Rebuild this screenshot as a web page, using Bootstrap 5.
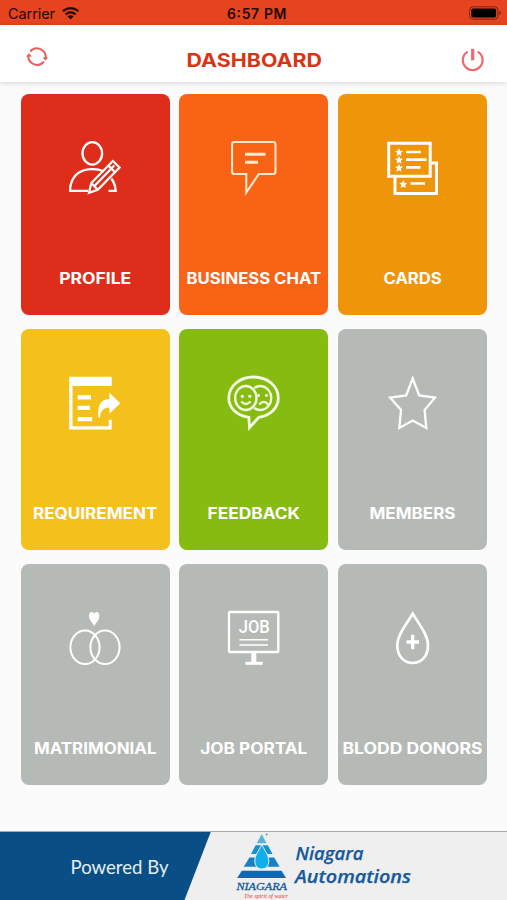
<!DOCTYPE html>
<html lang="en">
<head>
<meta charset="utf-8">
<meta name="viewport" content="width=device-width, initial-scale=1">
<title>Dashboard</title>
<link href="https://cdn.jsdelivr.net/npm/bootstrap@5.3.0/dist/css/bootstrap.min.css" rel="stylesheet">
<style>
body{background:#fbfbfb;font-family:Inter,"Liberation Sans",sans-serif;width:507px;height:900px;overflow:hidden}
svg{display:block;overflow:visible}
.status{height:25px;background:#e6431f;color:#250800}
.topbar{height:57px;background:#fff;box-shadow:0 1px 5px rgba(0,0,0,.16)}
.tiles{display:grid;grid-template-columns:repeat(3,149px);grid-auto-rows:221px;gap:14px 9.7px;margin:12px 0 0 20.5px}
.tile{border-radius:8px;color:#fff;text-decoration:none}
.tile svg{fill:none;stroke:#fff;stroke-width:2.3}
.tile text{fill:#fff;stroke:none;font-weight:700;font-size:15.4px;text-anchor:middle}
.tile .solid{fill:#fff;stroke:none}
.red{background:#de2d1b}.orange{background:#f86316}.amber{background:#ee950a}
.yellow{background:#f3c01c}.green{background:#86bc11}.gray{background:#b5bab6}
.brandbar{height:69px;background:#efefef;border-top:1px solid #aaa}
</style>
<script src="https://cdn.jsdelivr.net/npm/bootstrap@5.3.0/dist/js/bootstrap.bundle.min.js"></script>
</head>
<body class="d-flex flex-column">
<header>
<div class="status">
<svg width="507" height="25" fill="#250800">
<text x="8" y="18.8" font-size="14.5" textLength="47">Carrier</text>
<g fill="none" stroke="#250800" stroke-width="2.3"><path d="M62.8 11.1q7.8-6 15.6 0M65.6 14.3q5-3.9 10 0"/></g>
<path d="M67.5 16.3q3.1-2.1 6.2 0L70.6 19.4z"/>
<text x="227" y="18.8" font-size="14" font-weight="600" textLength="59.5">6:57 PM</text>
<rect x="469.5" y="6.8" width="28.5" height="12.4" rx="3.5" fill="none" stroke="#7c2411"/>
<rect x="471.3" y="8.5" width="24.8" height="9" rx="1.8" fill="#000"/>
<path d="M499.3 11v4q1.5-.5 1.5-2t-1.5-2z" fill="#7c2411"/>
</svg>
</div>
<div class="topbar">
<svg width="507" height="57" viewBox="0 25 507 57">
<g fill="none" stroke="#e5605c" stroke-width="2">
<path d="M30.2 51.5A8.8 8.8 0 0 1 45.7 58.2M43.9 61.7A8.8 8.8 0 0 1 28.4 55"/>
</g>
<path d="M42.8 57.2l5.4.3-3 3.2zM26 56.8l2.8-3.6 3.3 3.4z" fill="#e5605c"/>
<text x="186.5" y="66.6" font-size="18.8" font-weight="700" fill="#d93414" textLength="135.5" lengthAdjust="spacingAndGlyphs">DASHBOARD</text>
<g fill="none" stroke="#ea6a70" stroke-width="2.2"><path d="M467.7 51.6a9.9 9.9 0 1 0 10 0"/><path d="M472.7 48.8v11.5" stroke-width="3.2"/></g>
</svg>
</div>
</header>
<main class="tiles">
<a class="tile red"><svg width="149" height="221">
<g transform="translate(34 36)"><ellipse cx="37.3" cy="23.4" rx="9.8" ry="11.2"/><path d="M49 41.5q-5-2.3-11.5-2.3-19 0-22.3 18v3.6H33M53.5 60.8h7.2q-.3-6.5-4.3-12.3"/><path d="M34 62.8l2.3-9.8L57.8 31l6.8 6.5-21.8 22.2zM36.3 53l6.5 6.7M39.7 55.8l19.6-20.2M53.4 35.6l6.6 6.6" stroke-width="2.2"/></g>
<text x="74.2" y="189.600" textLength="72" lengthAdjust="spacingAndGlyphs">PROFILE</text></svg></a>
<a class="tile orange"><svg width="149" height="221">
<g transform="translate(35.8 36)" stroke="#ffe9cc" stroke-width="2"><path d="M19.5 12h39q2.2 0 2.2 2.2v27.6q0 2.2-2.2 2.2H44L31.5 62.5V44h-12q-2.2 0-2.2-2.2V14.2q0-2.2 2.2-2.2z"/><path d="M30.2 24.3h20.5M30.2 32.3h13" stroke-width="3"/></g>
<text x="74.8" y="189.6" textLength="134.5" lengthAdjust="spacingAndGlyphs">BUSINESS CHAT</text></svg></a>
<a class="tile amber"><svg width="149" height="221">
<g transform="translate(35 36)"><path d="M15.7 13.2h41.5v33H15.7z" stroke-width="3"/><path d="M22 47v16.4h41.5V33H58" stroke-width="3"/><path d="M33 22h15M33 29.6h20.5M33 37.3h14.5M37.5 53.5h14.5" stroke-width="2.7"/>
<g class="solid"><path id="smallStar" d="M26 18l1.2 2.7 2.8.3-2.1 2 .6 3-2.5-1.5-2.5 1.5.6-3-2.1-2 2.8-.3z"/><use href="#smallStar" y="7.8"/><use href="#smallStar" y="15.7"/><use href="#smallStar" x="4.3" y="32.1"/></g></g>
<text x="74.6" y="189.6" textLength="58" lengthAdjust="spacingAndGlyphs">CARDS</text></svg></a>

<a class="tile yellow"><svg width="149" height="221">
<g transform="translate(34 36)"><path class="solid" d="M14.2 11.7h42.5v9.2H17.5v40.3h36.2v-6.4h3V64.5H14.2z"/><path d="M22.7 32.4H36M22.7 42.9H35M22.7 54.2h14.5" stroke-width="4.2"/><path class="solid" d="M43.5 52.8C42 40 46 34.2 54.4 34v-6.2L65.3 38.2 54.4 48.8v-6.4c-6 .1-9.2 3.5-9.4 10.4z"/></g>
<text x="74.2" y="189.6" textLength="124.5" lengthAdjust="spacingAndGlyphs">REQUIREMENT</text></svg></a>
<a class="tile green"><svg width="149" height="221">
<g transform="translate(35.8 36)" stroke="#f4fde2"><path d="M34 52.3C20.5 50 14 42 14 33c0-12 11-21 24.8-21s24.7 9 24.7 21c0 10-8 17.3-19.5 19.3l-9.3 10.4z" stroke-width="2.8"/><ellipse cx="31" cy="33" rx="10.7" ry="12"/><path d="M39.4 23a11 12 0 1 1 0 20"/><path d="M26.5 36.5q4.6 5 9.2 0M44.5 39.5q4.4-5.4 8.8 0"/><g class="solid"><circle cx="27.5" cy="31.3" r="1.6"/><circle cx="35" cy="31.3" r="1.6"/><circle cx="43.8" cy="30.5" r="1.4"/><circle cx="51.6" cy="30.5" r="1.4"/></g></g>
<text x="74.8" y="189.6" textLength="92.5" lengthAdjust="spacingAndGlyphs">FEEDBACK</text></svg></a>
<a class="tile gray"><svg width="149" height="221">
<g transform="translate(35 36)"><path d="M39.7 13.5L46.2 30.4 62 32.7 51.6 45 53.3 63 39.7 55.5 26.3 63 28 45 17.2 32.7 33.2 30.4z"/></g>
<text x="74.5" y="189.6" textLength="86" lengthAdjust="spacingAndGlyphs">MEMBERS</text></svg></a>

<a class="tile gray"><svg width="149" height="221">
<g transform="translate(34 36)"><ellipse cx="30" cy="47.3" rx="14.6" ry="16.7" stroke-width="2"/><ellipse cx="50" cy="47.3" rx="14.6" ry="16.7" stroke-width="2"/><path class="solid" d="M39.2 25.8C36.5 22 34 19.5 34 15.7c0-4.2 3.9-4.8 5.2-1.9 1.4-2.9 5.1-2.3 5.1 1.9 0 3.8-2.4 6.3-5.1 10.1z"/></g>
<text x="74.2" y="189.6" textLength="122.5" lengthAdjust="spacingAndGlyphs">MATRIMONIAL</text></svg></a>
<a class="tile gray"><svg width="149" height="221">
<g transform="translate(35.8 36)"><rect x="14.2" y="12" width="49.3" height="40" rx=".8"/><path d="M39 52v11" stroke-width="5"/><path d="M30.5 63.3h17.3" stroke-width="3"/><path d="M24.7 39.8h28.5M24.7 45h28.5" stroke-width="1.5"/><text x="39.5" y="33.2" style="font-family:Roboto,sans-serif;font-size:18.2px;font-weight:500" textLength="31" lengthAdjust="spacingAndGlyphs">JOB</text></g>
<text x="74.8" y="189.6" textLength="107" lengthAdjust="spacingAndGlyphs">JOB PORTAL</text></svg></a>
<a class="tile gray"><svg width="149" height="221">
<g transform="translate(35 36)"><path d="M39.7 13.7C33.5 24 24.3 35 24.3 45.5c0 10.5 6.5 17.5 15.4 17.5s15.3-7 15.3-17.5c0-10.5-9-21.5-15.3-31.8z" stroke-width="2.7"/><path d="M33.5 42H46M39.7 34.8v14.4" stroke-width="3.4"/></g>
<text x="74.5" y="189.6" textLength="140" lengthAdjust="spacingAndGlyphs">BLODD DONORS</text></svg></a>
</main>
<footer class="brandbar mt-auto">
<svg width="507" height="68" viewBox="0 832 507 68">
<path d="M0 832h210.7L184.5 900H0z" fill="#094f86"/>
<text x="70.5" y="873.8" font-family="Lato" font-size="18.3" fill="#e4eef5" textLength="98" lengthAdjust="spacingAndGlyphs">Powered By</text>
<path d="M261.7 834l4.9 9.2h-9.8z" fill="#55b4df"/><circle cx="266.7" cy="834.6" r="1" fill="#888"/>
<path d="M255.6 845.2h12.2l4.7 8.8h-21.5z" fill="#198fce"/><path d="M249.5 857.5h24.7l5.4 9.3h-35.9z" fill="#1580c4"/>
<path d="M241.8 870.7h39.7l4.6 7.3h-48.9z" fill="#1168ae"/>
<path d="M261.8 844.5c-3 6.5-7 10.5-7 16.5 0 5 3 8 7 8s7-3 7-8c0-6-4-10-7-16.5z" fill="#10aeea" stroke="#efefef"/>
<g fill="#16599c"><text x="236.5" y="889.5" font-family="Liberation Serif" font-size="10.5" font-style="italic" stroke="#16599c" stroke-width=".3" textLength="50.5" lengthAdjust="spacingAndGlyphs">NIAGARA</text>
<g font-family="Open Sans" font-size="18.5" font-weight="600" font-style="italic" stroke="#16599c" stroke-width=".25"><text x="295.5" y="859.6" textLength="68" lengthAdjust="spacingAndGlyphs">Niagara</text><text x="295" y="882.7" textLength="116" lengthAdjust="spacingAndGlyphs">Automations</text></g></g>
<text x="244" y="898.3" font-family="Liberation Serif" font-size="6.5" font-style="italic" fill="#e33" textLength="44" lengthAdjust="spacingAndGlyphs">The spirit of water</text>
</svg>
</footer>
</body>
</html>
